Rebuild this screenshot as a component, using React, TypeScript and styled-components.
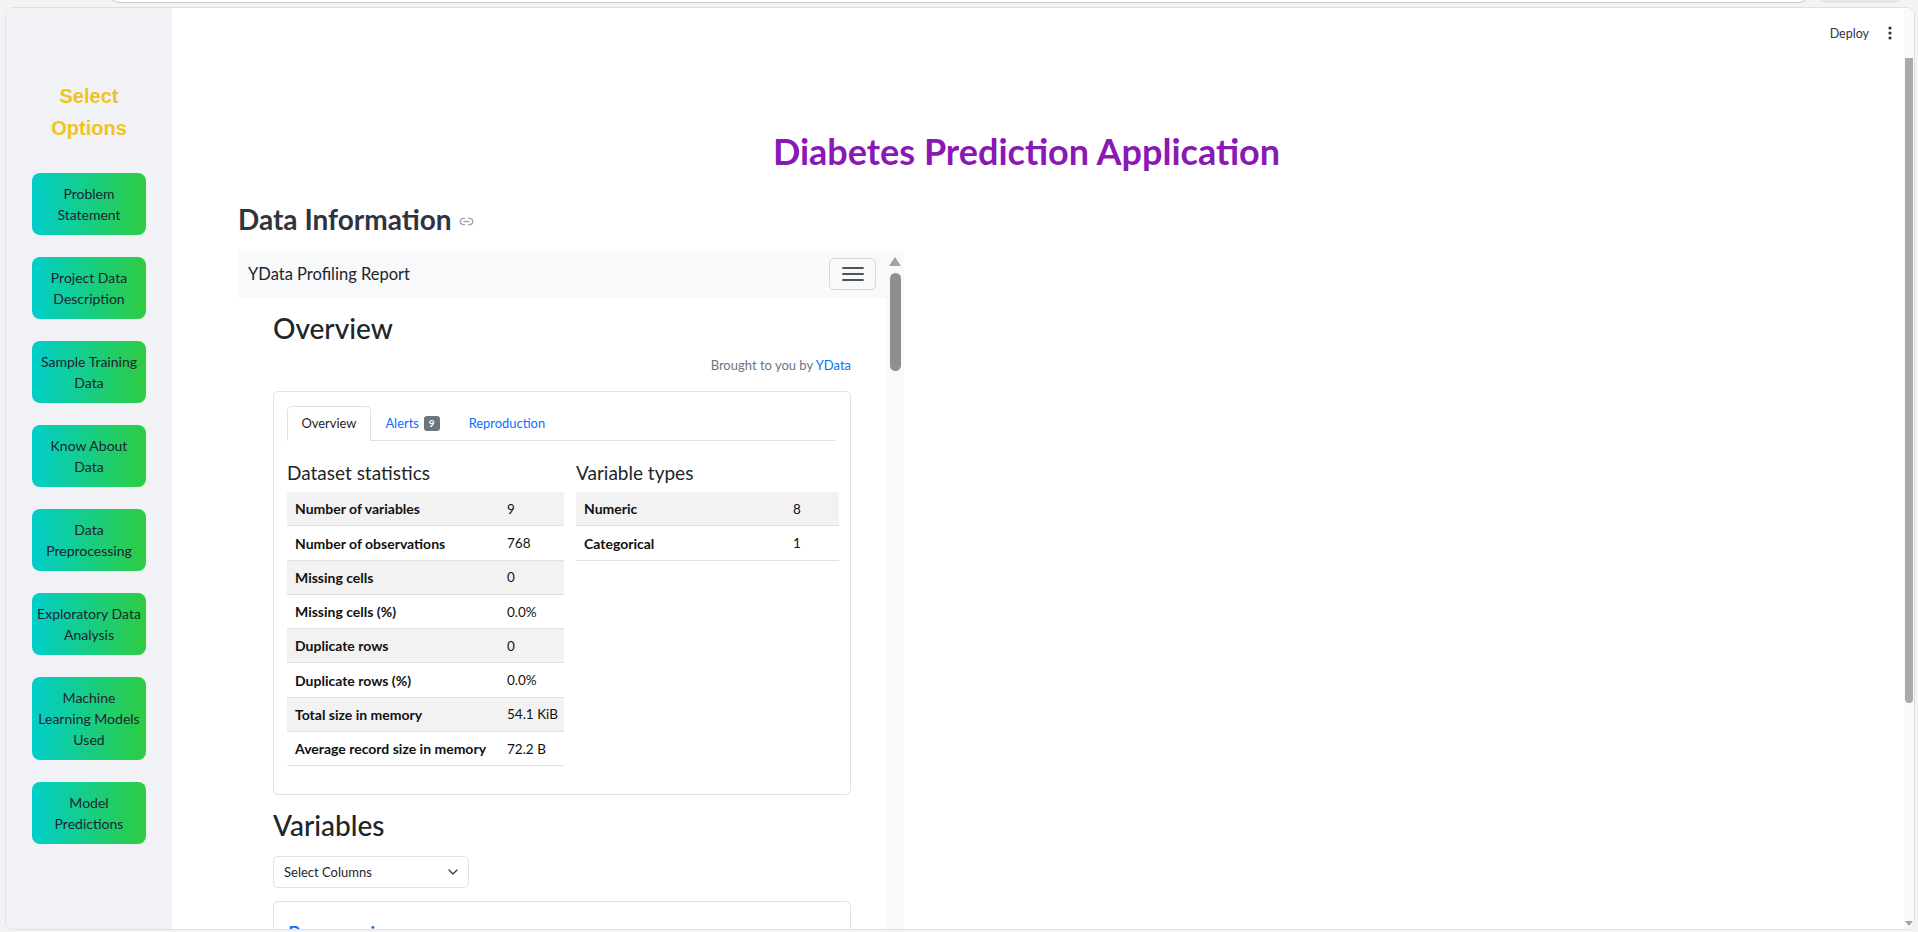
import React from "react";
import styled, { createGlobalStyle } from "styled-components";
import { Link2 } from "lucide-react";

const GlobalStyle = createGlobalStyle`
  html, body { margin: 0; padding: 0; }
  body { background: #f3f3f3; font-family: Lato, "Noto Sans", sans-serif; overflow: hidden; }
  * { box-sizing: border-box; }
`;

const Page = styled.div`
  width: 1918px;
  height: 932px;
  display: flex;
  flex-direction: column;
  background: #f3f3f3;
  overflow: hidden;
`;

const ChromeStrip = styled.div`
  height: 7px;
  flex-shrink: 0;
  display: flex;
  overflow: hidden;
`;

const AddressBar = styled.div`
  margin-left: 108px;
  margin-top: -21px;
  width: 1702px;
  height: 24px;
  background: #ffffff;
  border: 1px solid #c8c8c8;
  border-top: none;
  border-radius: 0 0 12px 12px;
`;

const ChromeButton = styled.div`
  margin-left: 7px;
  margin-top: -21px;
  width: 86px;
  height: 24px;
  background: #e6e6e6;
  border-radius: 0 0 10px 10px;
`;

const Window = styled.div`
  flex: 1;
  min-height: 0;
  margin: 0 3px 2px 5px;
  border: 1px solid #e0e0e0;
  border-radius: 9px;
  overflow: hidden;
  display: flex;
  background: #ffffff;
`;

const Sidebar = styled.aside`
  width: 166px;
  flex-shrink: 0;
  background: #f0f2f6;
  display: flex;
  flex-direction: column;
  align-items: center;
  padding-top: 72px;
`;

const SidebarTitle = styled.div`
  font-family: "Liberation Sans", Arial, sans-serif;
  font-weight: 700;
  font-size: 20px;
  line-height: 32px;
  color: #f0c41b;
  text-align: center;
  max-width: 100px;
  margin-bottom: 29px;
`;

const NavList = styled.nav`
  display: flex;
  flex-direction: column;
  gap: 22px;
  width: 114px;
`;

const NavButton = styled.button`
  width: 114px;
  border: none;
  border-radius: 8px;
  padding: 10px 2px;
  background: linear-gradient(to right, #00cfca, #2ecc40);
  font-family: Lato, "Noto Sans", sans-serif;
  font-size: 14px;
  line-height: 21px;
  color: #1f2430;
  text-align: center;
  white-space: nowrap;
  cursor: pointer;
`;

const Main = styled.main`
  flex: 1;
  min-width: 0;
  display: flex;
  background: #ffffff;
`;

const MainColumn = styled.div`
  flex: 1;
  min-width: 0;
  display: flex;
  flex-direction: column;
`;

const Header = styled.header`
  height: 50px;
  flex-shrink: 0;
  display: flex;
  justify-content: flex-end;
  align-items: center;
  gap: 19px;
  padding-right: 12px;
`;

const DeployLabel = styled.span`
  font-family: Lato, sans-serif;
  font-size: 12.5px;
  color: #31333f;
`;

const Content = styled.div`
  flex: 1;
  min-height: 0;
  display: flex;
  flex-direction: column;
  padding: 0 89px 0 66px;
`;

const Title = styled.h1`
  margin: 72px 0 0;
  font-family: Lato, sans-serif;
  font-weight: 700;
  font-size: 36px;
  line-height: 1.2;
  color: #8a18b4;
  text-align: center;
`;

const SectionHeading = styled.h2`
  margin: 30px 0 0;
  display: flex;
  align-items: center;
  gap: 7px;
  font-family: Lato, sans-serif;
  font-weight: 700;
  font-size: 28px;
  line-height: 1.2;
  color: #31333f;
`;

const AnchorIcon = styled.span`
  display: inline-flex;
  color: #a3a6ae;
  margin-top: 4px;
`;

const ReportFrame = styled.div`
  margin-top: 14px;
  width: 666px;
  flex: 1;
  min-height: 0;
  display: flex;
  overflow: hidden;
`;

const ReportBody = styled.div`
  flex: 1;
  min-width: 0;
  display: flex;
  flex-direction: column;
  overflow: hidden;
  font-family: Lato, "Noto Sans", sans-serif;
  color: #212529;
`;

const Navbar = styled.div`
  height: 47px;
  flex-shrink: 0;
  background: #f8f9fa;
  display: flex;
  align-items: center;
  justify-content: space-between;
  padding: 0 10px;
`;

const Brand = styled.span`
  font-size: 16.5px;
  color: #212529;
`;

const Toggler = styled.button`
  width: 47px;
  height: 32px;
  border: 1px solid rgba(0, 0, 0, 0.13);
  border-radius: 5px;
  background: transparent;
  display: flex;
  align-items: center;
  justify-content: center;
  padding: 0;
`;

const ReportMain = styled.div`
  padding: 0 35px;
  display: flex;
  flex-direction: column;
`;

const ReportH1 = styled.h1<{ $gap: number }>`
  margin: ${(p) => p.$gap}px 0 0;
  font-weight: 500;
  font-size: 28px;
  line-height: 1.2;
  color: #212529;
`;

const Byline = styled.p`
  margin: 11px 0 0;
  text-align: right;
  font-size: 13px;
  line-height: 19.5px;
  color: #6c757d;
`;

const BlueLink = styled.a`
  color: #0d6efd;
  text-decoration: none;
`;

const Card = styled.div`
  margin-top: 15px;
  border: 1px solid #dee2e6;
  border-radius: 5px;
  padding: 14px 14px 14px 13px;
`;

const Tabs = styled.div`
  display: flex;
  border-bottom: 1px solid #dee2e6;
`;

const Tab = styled.span<{ $active?: boolean }>`
  display: inline-flex;
  align-items: center;
  padding: 7px 13.5px;
  margin-bottom: -1px;
  font-size: 12.9px;
  line-height: 19.5px;
  border: 1px solid transparent;
  border-radius: 5px 5px 0 0;
  color: ${(p) => (p.$active ? "#212529" : "#0d6efd")};
  background: ${(p) => (p.$active ? "#ffffff" : "transparent")};
  border-color: ${(p) => (p.$active ? "#dee2e6 #dee2e6 #ffffff" : "transparent")};
`;

const Badge = styled.span`
  margin-left: 5px;
  background: #6c757d;
  color: #ffffff;
  font-size: 10px;
  font-weight: 700;
  line-height: 15px;
  padding: 0 5px;
  border-radius: 3px;
`;

const StatsGrid = styled.div`
  display: grid;
  grid-template-columns: 277px 263px;
  column-gap: 12px;
  margin: 21px 0 14px;
  align-items: start;
`;

const StatsHeading = styled.h4`
  margin: 0 0 7px;
  font-weight: 400;
  font-size: 19px;
  line-height: 1.2;
  color: #212529;
`;

const StatRow = styled.div<{ $shade: boolean; $labelWidth: number }>`
  display: grid;
  grid-template-columns: ${(p) => p.$labelWidth}px 1fr;
  align-items: center;
  height: 34.25px;
  border-bottom: 1px solid #dee2e6;
  background: ${(p) => (p.$shade ? "#f2f2f2" : "#ffffff")};
  font-size: 13.5px;
  color: #111;
`;

const StatLabel = styled.span`
  padding-left: 8px;
  font-weight: 700;
  font-size: 14px;
`;

const StatValue = styled.span`
  padding-left: 8px;
`;

const SelectBox = styled.div`
  margin-top: 13px;
  width: 196px;
  height: 32px;
  border: 1px solid #dee2e6;
  border-radius: 5px;
  padding: 0 10px;
  display: flex;
  align-items: center;
  justify-content: space-between;
  font-size: 13px;
  color: #212529;
`;

const VarCard = styled.div`
  margin-top: 13px;
  border: 1px solid #dee2e6;
  border-radius: 5px;
  padding: 18px 14px 20px;
  height: 120px;
`;

const VarLink = styled.a`
  font-size: 20px;
  font-weight: 600;
  line-height: 1.2;
  color: #0d6efd;
  text-decoration: none;
`;

const FrameScroll = styled.div`
  width: 18px;
  flex-shrink: 0;
  background: #f9f9f9;
  display: flex;
  flex-direction: column;
  align-items: center;
  padding-top: 6px;
`;

const ArrowUp = styled.div`
  width: 0;
  height: 0;
  border-left: 6px solid transparent;
  border-right: 6px solid transparent;
  border-bottom: 9px solid #a3a3a3;
`;

const FrameThumb = styled.div`
  margin-top: 7px;
  width: 11px;
  height: 98px;
  border-radius: 6px;
  background: #8f8f8f;
`;

const MainScroll = styled.div`
  width: 10px;
  flex-shrink: 0;
  background: #fafafa;
  display: flex;
  flex-direction: column;
  align-items: center;
  justify-content: space-between;
  padding: 50px 0 3px;
`;

const MainThumb = styled.div`
  width: 8px;
  height: 645px;
  border-radius: 0 0 4px 4px;
  background: #a9a9ae;
`;

const ArrowDown = styled.div`
  width: 0;
  height: 0;
  border-left: 4px solid transparent;
  border-right: 4px solid transparent;
  border-top: 5px solid #a3a3a3;
`;

const navItems: string[][] = [
  ["Problem", "Statement"],
  ["Project Data", "Description"],
  ["Sample Training", "Data"],
  ["Know About", "Data"],
  ["Data", "Preprocessing"],
  ["Exploratory Data", "Analysis"],
  ["Machine", "Learning Models", "Used"],
  ["Model", "Predictions"],
];

const datasetStats: [string, string][] = [
  ["Number of variables", "9"],
  ["Number of observations", "768"],
  ["Missing cells", "0"],
  ["Missing cells (%)", "0.0%"],
  ["Duplicate rows", "0"],
  ["Duplicate rows (%)", "0.0%"],
  ["Total size in memory", "54.1 KiB"],
  ["Average record size in memory", "72.2 B"],
];

const variableTypes: [string, string][] = [
  ["Numeric", "8"],
  ["Categorical", "1"],
];

const Kebab = () => (
  <svg width="4" height="14" viewBox="0 0 4 14">
    <circle cx="2" cy="2" r="1.6" fill="#31333f" />
    <circle cx="2" cy="7" r="1.6" fill="#31333f" />
    <circle cx="2" cy="12" r="1.6" fill="#31333f" />
  </svg>
);

const Hamburger = () => (
  <svg width="22" height="16" viewBox="0 0 22 16">
    <g stroke="#505457" strokeWidth="1.8" strokeLinecap="round">
      <line x1="1" y1="2" x2="21" y2="2" />
      <line x1="1" y1="8" x2="21" y2="8" />
      <line x1="1" y1="14" x2="21" y2="14" />
    </g>
  </svg>
);

const Chevron = () => (
  <svg width="10" height="6" viewBox="0 0 10 6">
    <path d="M1 1l4 4 4-4" fill="none" stroke="#343a40" strokeWidth="1.3" strokeLinecap="round" strokeLinejoin="round" />
  </svg>
);

const StatTable = ({ rows, labelWidth }: { rows: [string, string][]; labelWidth: number }) => (
  <div>
    {rows.map(([label, value], i) => (
      <StatRow key={label} $shade={i % 2 === 0} $labelWidth={labelWidth}>
        <StatLabel>{label}</StatLabel>
        <StatValue>{value}</StatValue>
      </StatRow>
    ))}
  </div>
);

export default function App() {
  return (
    <Page>
      <GlobalStyle />
      <ChromeStrip>
        <AddressBar />
        <ChromeButton />
      </ChromeStrip>
      <Window>
        <Sidebar>
          <SidebarTitle>Select Options</SidebarTitle>
          <NavList>
            {navItems.map((lines) => (
              <NavButton key={lines.join(" ")}>
                {lines.map((l, i) => (
                  <React.Fragment key={l}>
                    {i > 0 && <br />}
                    {l}
                  </React.Fragment>
                ))}
              </NavButton>
            ))}
          </NavList>
        </Sidebar>
        <Main>
          <MainColumn>
            <Header>
              <DeployLabel>Deploy</DeployLabel>
              <Kebab />
            </Header>
            <Content>
              <Title>Diabetes Prediction Application</Title>
              <SectionHeading>
                Data Information
                <AnchorIcon>
                  <Link2 size={15} strokeWidth={2.2} />
                </AnchorIcon>
              </SectionHeading>
              <ReportFrame>
                <ReportBody>
                  <Navbar>
                    <Brand>YData Profiling Report</Brand>
                    <Toggler>
                      <Hamburger />
                    </Toggler>
                  </Navbar>
                  <ReportMain>
                    <ReportH1 $gap={14}>Overview</ReportH1>
                    <Byline>
                      Brought to you by <BlueLink>YData</BlueLink>
                    </Byline>
                    <Card>
                      <Tabs>
                        <Tab $active>Overview</Tab>
                        <Tab>
                          Alerts <Badge>9</Badge>
                        </Tab>
                        <Tab>Reproduction</Tab>
                      </Tabs>
                      <StatsGrid>
                        <div>
                          <StatsHeading>Dataset statistics</StatsHeading>
                          <StatTable rows={datasetStats} labelWidth={212} />
                        </div>
                        <div>
                          <StatsHeading>Variable types</StatsHeading>
                          <StatTable rows={variableTypes} labelWidth={209} />
                        </div>
                      </StatsGrid>
                    </Card>
                    <ReportH1 $gap={14}>Variables</ReportH1>
                    <SelectBox>
                      <span>Select Columns</span>
                      <Chevron />
                    </SelectBox>
                    <VarCard>
                      <VarLink>Pregnancies</VarLink>
                    </VarCard>
                  </ReportMain>
                </ReportBody>
                <FrameScroll>
                  <ArrowUp />
                  <FrameThumb />
                </FrameScroll>
              </ReportFrame>
            </Content>
          </MainColumn>
          <MainScroll>
            <MainThumb />
            <ArrowDown />
          </MainScroll>
        </Main>
      </Window>
    </Page>
  );
}
